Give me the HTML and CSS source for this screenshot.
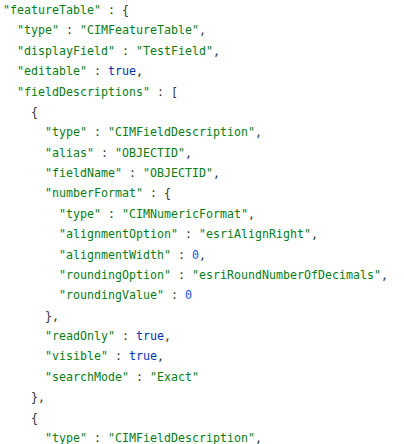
FILE: index.html
```html
<!DOCTYPE html>
<html>
<head>
<meta charset="utf-8">
<link rel="stylesheet" href="styles.css">
</head>
<body>
<pre class="code"><span class="s">"featureTable"</span> : {
  <span class="s">"type"</span> : <span class="s">"CIMFeatureTable"</span>,
  <span class="s">"displayField"</span> : <span class="s">"TestField"</span>,
  <span class="s">"editable"</span> : <span class="k">true</span>,
  <span class="s">"fieldDescriptions"</span> : [
    {
      <span class="s">"type"</span> : <span class="s">"CIMFieldDescription"</span>,
      <span class="s">"alias"</span> : <span class="s">"OBJECTID"</span>,
      <span class="s">"fieldName"</span> : <span class="s">"OBJECTID"</span>,
      <span class="s">"numberFormat"</span> : {
        <span class="s">"type"</span> : <span class="s">"CIMNumericFormat"</span>,
        <span class="s">"alignmentOption"</span> : <span class="s">"esriAlignRight"</span>,
        <span class="s">"alignmentWidth"</span> : <span class="n">0</span>,
        <span class="s">"roundingOption"</span> : <span class="s">"esriRoundNumberOfDecimals"</span>,
        <span class="s">"roundingValue"</span> : <span class="n">0</span>
      },
      <span class="s">"readOnly"</span> : <span class="k">true</span>,
      <span class="s">"visible"</span> : <span class="k">true</span>,
      <span class="s">"searchMode"</span> : <span class="s">"Exact"</span>
    },
    {
      <span class="s">"type"</span> : <span class="s">"CIMFieldDescription"</span>,
</pre>
</body>
</html>
```
FILE: styles.css
```css
html, body {
  margin: 0;
  padding: 0;
  background: #ffffff;
}
.code {
  margin: 0;
  padding: 0 0 0 3px;
  font-family: "DejaVu Sans Mono", "Liberation Mono", monospace;
  font-size: 11.63px;
  line-height: 20.38px;
  color: #333333;
  white-space: pre;
}
.s { color: #067d17; }
.k { color: #0033b3; }
.n { color: #1750eb; }
```
